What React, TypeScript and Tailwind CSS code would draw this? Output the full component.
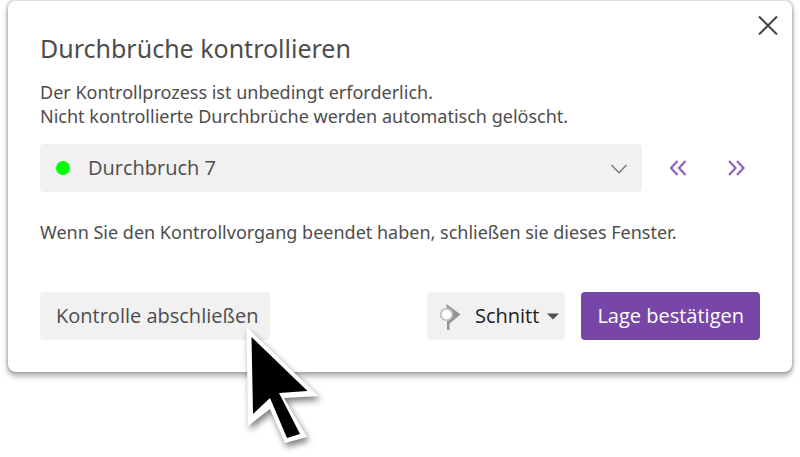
import { useState } from 'react'

const openings = ['Durchbruch 7', 'Durchbruch 8', 'Durchbruch 9']

const SectionIcon = () => (
    <svg width="22" height="28" viewBox="0 0 22 28" aria-hidden="true">
        <path d="M7.5 2 L21.5 12.5 L10.5 21.5 V28 H8 V21 Z" fill="#949494" />
        <circle cx="7.5" cy="12.5" r="5.8" fill="#fff" stroke="#c4c4c4" strokeWidth="2" />
    </svg>
)

const Cursor = () => (
    <svg
        className="absolute left-[236px] top-[316px] pointer-events-none drop-shadow-[2px_4px_3px_rgba(0,0,0,0.5)]"
        width="90" height="136" viewBox="236 316 90 136" aria-hidden="true">
        <path d="M246.5 327 L318.5 396 L284 398 L307 437 L285 443 L270 409 L248 426 Z" fill="#fff" />
        <path d="M251.5 337 L307.5 391 L279 393 L300 434 L287 438 L270 398 L253 414 Z" fill="#000" />
    </svg>
)

export default function App() {
    const [index, setIndex] = useState(0)

    const move = (step: number) => {
        setIndex((index + step + openings.length) % openings.length)
    }

    return (
        <div className="relative min-h-screen overflow-hidden bg-white px-2 font-['Noto_Sans','Open_Sans',sans-serif] text-[#4d4d4d]">
            <section
                role="dialog"
                aria-labelledby="title"
                className="relative rounded-lg border-t border-[#dedede] bg-white px-8 pt-[31px] pb-8 shadow-[0_0_1px_2px_rgba(0,0,0,0.1),0_4px_5px_1px_rgba(0,0,0,0.26)]">
                <button type="button" aria-label="Schließen" className="absolute right-3 top-3 flex size-6 items-center justify-center">
                    <svg width="20" height="20" viewBox="0 0 20 20" fill="none" stroke="#444" strokeWidth="2" aria-hidden="true">
                        <path d="M1 1.5 L19 19.5 M19 1.5 L1 19.5" />
                    </svg>
                </button>

                <h1 id="title" className="text-[25px] leading-8">Durchbrüche kontrollieren</h1>
                <p className="mt-4 text-[18px] leading-6">
                    Der Kontrollprozess ist unbedingt erforderlich.
                    <br />
                    Nicht kontrollierte Durchbrüche werden automatisch gelöscht.
                </p>

                <div className="mt-4 flex items-center">
                    <div className="relative flex-1">
                        <select
                            aria-label="Durchbruch"
                            value={index}
                            onChange={(e) => setIndex(Number(e.target.value))}
                            className="block h-12 w-full appearance-none rounded-sm bg-[#f1f1f1] px-12 font-['Open_Sans',sans-serif] text-[20px]">
                            {openings.map((name, i) => (
                                <option key={name} value={i}>{name}</option>
                            ))}
                        </select>
                        <span className="absolute left-4 top-[17px] size-3.5 rounded-full bg-[#00ff00]" />
                        <svg
                            className="pointer-events-none absolute right-[14px] top-5"
                            width="18" height="11" viewBox="0 0 18 11" fill="none" stroke="#7a7a7a" strokeWidth="1.5" aria-hidden="true">
                            <path d="M1.5 1 L9 8.7 L16.5 1" />
                        </svg>
                    </div>
                    <div className="ml-3 flex gap-2.5">
                        <button type="button" aria-label="Vorheriger" onClick={() => move(-1)} className="flex size-12 items-center justify-center">
                            <svg width="18" height="16" viewBox="0 0 18 16" fill="none" stroke="#8f62bd" strokeWidth="2.2" aria-hidden="true">
                                <path d="M8.5 1 L2 8 L8.5 15 M16.5 1 L10 8 L16.5 15" />
                            </svg>
                        </button>
                        <button type="button" aria-label="Nächster" onClick={() => move(1)} className="flex size-12 items-center justify-center">
                            <svg width="18" height="16" viewBox="0 0 18 16" fill="none" stroke="#8f62bd" strokeWidth="2.2" aria-hidden="true">
                                <path d="M2 1 L8.5 8 L2 15 M10 1 L16.5 8 L10 15" />
                            </svg>
                        </button>
                    </div>
                </div>

                <p className="mt-7 text-[18px] leading-6">
                    Wenn Sie den Kontrollvorgang beendet haben, schließen sie dieses Fenster.
                </p>

                <div className="mt-12 flex h-12 gap-4 font-['Open_Sans',sans-serif] text-[20px]">
                    <button type="button" className="rounded-sm bg-[#f1f1f1] pl-4 pr-3">Kontrolle abschließen</button>
                    <button type="button" className="ml-auto flex items-center rounded-sm bg-[#f1f1f1] pl-3 pr-1.5 text-[#1c1c1c]">
                        <SectionIcon />
                        <span className="ml-3.5">Schnitt</span>
                        <svg className="ml-2" width="12" height="7" viewBox="0 0 12 7" aria-hidden="true">
                            <path d="M0 0.5 H12 L6 6.5 Z" fill="#505050" />
                        </svg>
                    </button>
                    <button type="button" className="rounded-sm bg-[#7846a8] px-4 text-white">Lage bestätigen</button>
                </div>
            </section>
            <Cursor />
        </div>
    )
}
